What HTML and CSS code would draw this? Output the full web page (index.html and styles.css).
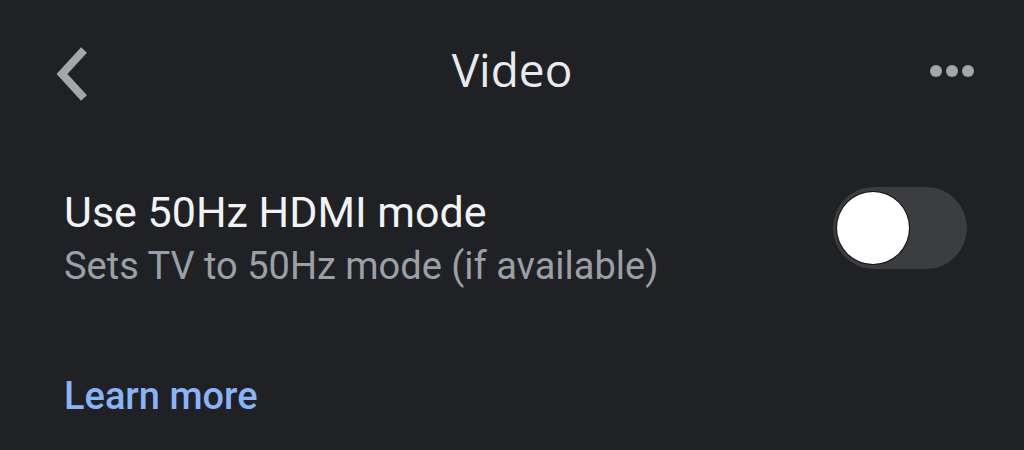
FILE: index.html
```html
<!DOCTYPE html>
<html>
<head>
<meta charset="utf-8">
<link rel="stylesheet" href="styles.css">
</head>
<body>
<div class="screen">
  <header class="topbar">
    <button class="icon-btn back" aria-label="Back">
      <svg width="40" height="56" viewBox="0 0 40 56"><path d="M30 4 L8 28 L30 52" fill="none" stroke="#a3a6ab" stroke-width="8" stroke-linecap="butt" stroke-linejoin="miter"/></svg>
    </button>
    <h1 class="title">Video</h1>
    <button class="icon-btn more" aria-label="More">
      <span class="dot"></span><span class="dot"></span><span class="dot"></span>
    </button>
  </header>
  <section class="setting">
    <div class="setting-text">
      <div class="setting-title">Use 50Hz HDMI mode</div>
      <div class="setting-sub">Sets TV to 50Hz mode (if available)</div>
    </div>
    <div class="toggle"><div class="knob"></div></div>
  </section>
  <a class="learn" href="#">Learn more</a>
</div>
</body>
</html>
```
FILE: styles.css
```css
html, body {
  margin: 0;
  padding: 0;
  background: #202124;
}
.screen {
  width: 1024px;
  height: 450px;
  background: #202124;
  font-family: Roboto, "Liberation Sans", sans-serif;
  overflow: hidden;
  box-sizing: border-box;
}
.topbar {
  height: 140px;
  display: flex;
  align-items: center;
  justify-content: space-between;
  padding: 0 50px 0 54px;
}
.icon-btn {
  background: none;
  border: 0;
  padding: 0;
  display: flex;
  align-items: center;
}
.back {
  margin-top: 8px;
}
.back svg { display: block; }
.title {
  margin: 0 0 2px 0;
  font-weight: 400;
  font-size: 46px;
  color: #e8eaed;
  font-family: "Open Sans", Roboto, sans-serif;
}
.more {
  gap: 4px;
  margin-top: 2px;
}
.dot {
  width: 12px;
  height: 12px;
  border-radius: 50%;
  background: #a3a6ab;
}
.setting {
  display: flex;
  align-items: center;
  justify-content: space-between;
  padding: 0 57px 0 64px;
  margin-top: 47px;
}
.setting-text {
  display: flex;
  flex-direction: column;
}
.setting-title {
  font-size: 43px;
  color: #f1f3f4;
  line-height: 50px;
}
.setting-sub {
  font-size: 38px;
  color: #9aa0a6;
  line-height: 50px;
  margin-top: 4px;
}
.toggle {
  width: 134px;
  height: 82px;
  border-radius: 41px;
  background: #3c3d41;
  display: flex;
  align-items: center;
  padding-left: 4px;
  box-sizing: border-box;
  margin-top: -22px;
}
.knob {
  width: 72px;
  height: 72px;
  border-radius: 50%;
  background: #fff;
  box-shadow: 0 0 0 1px #111;
}
.learn {
  display: block;
  margin: 83px 0 0 64px;
  font-size: 38px;
  color: #8ab4f8;
  text-decoration: none;
  font-family: Roboto, sans-serif;
  font-weight: 500;
}
```
